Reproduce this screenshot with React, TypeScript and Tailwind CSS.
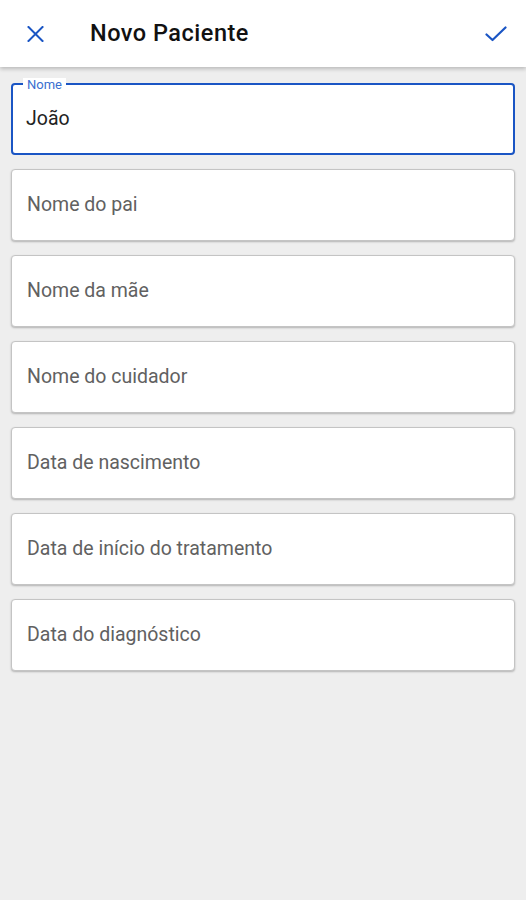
import React from "react";

const fields = [
  "Nome do pai",
  "Nome da mãe",
  "Nome do cuidador",
  "Data de nascimento",
  "Data de início do tratamento",
  "Data do diagnóstico",
];

export default function App() {
  return (
    <div className="min-h-[900px] w-[526px] bg-[#eeeeee]" style={{ fontFamily: "Roboto, 'Noto Sans', sans-serif" }}>
      <header className="relative z-10 flex h-[67px] items-center bg-white shadow-[0_2px_4px_rgba(0,0,0,0.22)]">
        <button className="ml-[27px] flex h-[16px] w-[17px] items-center justify-center text-[#1a55c4]">
          <svg width="17" height="16" viewBox="0 0 17 16" fill="none" stroke="currentColor" strokeWidth="2" strokeLinecap="square">
            <path d="M1.5 1 L15.5 15 M15.5 1 L1.5 15" />
          </svg>
        </button>
        <h1 className="ml-[46px] text-[23.5px] font-medium tracking-[0.5px] text-[#111111]">Novo Paciente</h1>
        <button className="ml-auto mr-[19px] flex items-center text-[#1a55c4]">
          <svg width="22" height="16" viewBox="0 0 22 16" fill="none" stroke="currentColor" strokeWidth="2.2" strokeLinecap="round" strokeLinejoin="round">
            <path d="M1.5 8.5 L7.5 14 L20.5 1.5" />
          </svg>
        </button>
      </header>
      <main className="flex flex-col gap-[14px] px-[11px] pt-[16px]">
        <div className="relative h-[72px] rounded-[4px] border-2 border-[#1a55c4] bg-white">
          <span className="absolute -top-[7px] left-[10px] bg-white px-[4px] text-[13px] leading-[14px] text-[#3a6fd0]">
            Nome
          </span>
          <div className="flex h-full items-center pl-[13px] text-[19.5px] text-[#222222]">João</div>
        </div>
        {fields.map((f) => (
          <div
            key={f}
            className="flex h-[72px] items-center rounded-[4px] border border-[#c4c4c4] bg-white pl-[15px] text-[19.5px] text-[#616161] shadow-[0_1px_2px_rgba(0,0,0,0.25)]"
          >
            {f}
          </div>
        ))}
      </main>
    </div>
  );
}
